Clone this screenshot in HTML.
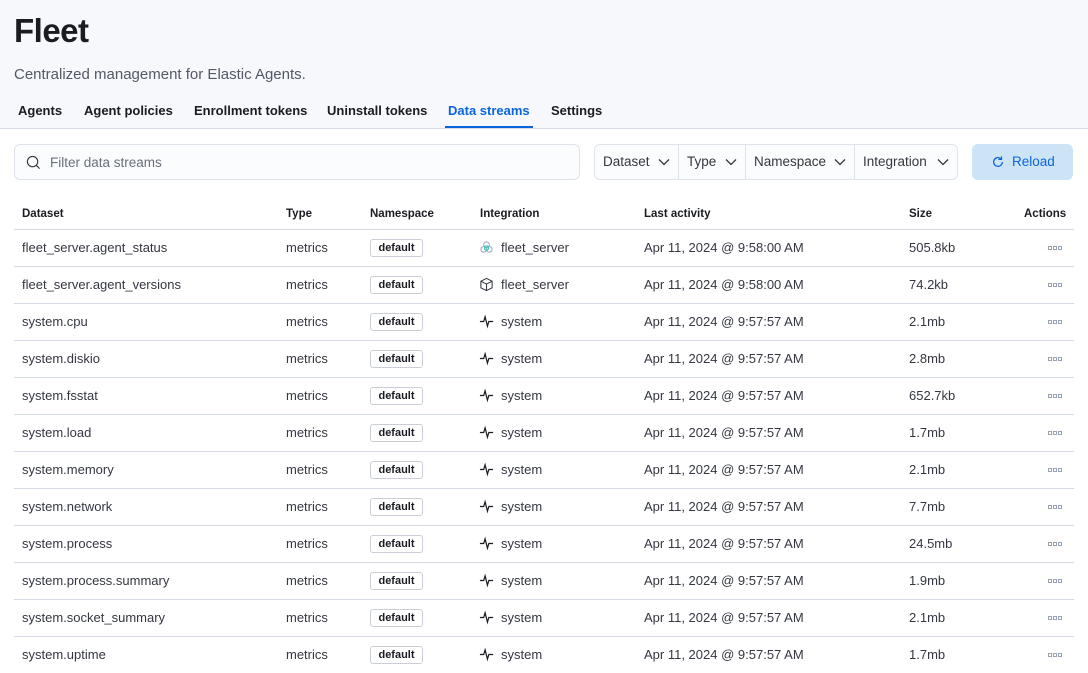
<!DOCTYPE html>
<html><head><meta charset="utf-8"><style>
*{box-sizing:border-box;margin:0;padding:0}
body{width:1088px;height:672px;overflow:hidden;background:#fff;font-family:"Liberation Sans",sans-serif;color:#343741;position:relative}
.hdr{position:absolute;left:0;top:0;width:1088px;height:129px;background:#f7f8fc;border-bottom:1px solid #d3dae6}
h1{position:absolute;left:14px;top:12px;font-size:33px;font-weight:700;color:#1a1c21;letter-spacing:-0.5px}
.sub{position:absolute;left:14px;top:66px;font-size:15px;color:#535966}
.tab{position:absolute;top:103px;font-size:13px;font-weight:700;color:#1a1c21}
.tab.act{color:#0b64dd}
.ul{position:absolute;left:445px;top:126px;width:88px;height:2px;background:#0b64dd}
.search{position:absolute;left:14px;top:144px;width:566px;height:36px;border:1px solid #dfe3eb;border-radius:6px;background:#fbfcfd}
.search span{position:absolute;left:35px;top:10px;font-size:13.5px;color:#69707d}
.filters{position:absolute;left:594px;top:144px;width:364px;height:36px;border:1px solid #dfe3eb;border-radius:6px;background:#fbfcfd;display:flex}
.filters div{height:34px;border-right:1px solid #dfe3eb;font-size:13.5px;color:#343741;padding:9px 0 0 8px;position:relative}
.filters div:last-child{border-right:none}
.filters svg{position:absolute;top:13px}
.reload{position:absolute;left:972px;top:144px;width:101px;height:36px;border-radius:6px;background:#cce4f5;color:#0b64dd;font-size:13.5px}
.reload span{position:absolute;left:40px;top:10px}
.th{position:absolute;top:208px;font-size:11.5px;font-weight:700;color:#1a1c21}
.row{position:absolute;left:14px;width:1060px;height:37px;border-top:1px solid #d3dae6;font-size:13px}
.row>*{position:absolute;top:10px}
.badge{top:9px!important;left:356px;width:53px;height:18px;border:1px solid #c9ced8;border-radius:3px;font-size:11px;font-weight:700;color:#1a1c21;text-align:center;line-height:16px}
.dots{display:block;left:1034px;top:16px!important;width:16px;height:4px}
.dots i{display:block;float:left;width:4px;height:4px;border:1px solid #98a2b3;margin-right:1px}
</style></head><body>
<div class="hdr"></div>
<h1>Fleet</h1>
<div class="sub">Centralized management for Elastic Agents.</div>
<div class="tab" style="left:18px">Agents</div>
<div class="tab" style="left:84px">Agent policies</div>
<div class="tab" style="left:194px">Enrollment tokens</div>
<div class="tab" style="left:327px">Uninstall tokens</div>
<div class="tab act" style="left:448px">Data streams</div>
<div class="tab" style="left:551px">Settings</div>
<div class="ul"></div>
<div class="search"><svg style="position:absolute;left:11px;top:10px" width="15" height="15" viewBox="0 0 16 16"><circle cx="7" cy="7" r="5.5" fill="none" stroke="#343741" stroke-width="1.2"/><path d="M11 11l3.5 3.5" stroke="#343741" stroke-width="1.2"/></svg><span>Filter data streams</span></div>
<div class="filters">
<div style="width:84px">Dataset<svg style="left:63px" width="12" height="8" viewBox="0 0 12 8"><path d="M1 1.5l5 5 5-5" fill="none" stroke="#343741" stroke-width="1.3"/></svg></div>
<div style="width:67px">Type<svg style="left:46px" width="12" height="8" viewBox="0 0 12 8"><path d="M1 1.5l5 5 5-5" fill="none" stroke="#343741" stroke-width="1.3"/></svg></div>
<div style="width:109px">Namespace<svg style="left:88px" width="12" height="8" viewBox="0 0 12 8"><path d="M1 1.5l5 5 5-5" fill="none" stroke="#343741" stroke-width="1.3"/></svg></div>
<div style="width:102px">Integration<svg style="left:82px" width="12" height="8" viewBox="0 0 12 8"><path d="M1 1.5l5 5 5-5" fill="none" stroke="#343741" stroke-width="1.3"/></svg></div>
</div>
<div class="reload"><svg style="position:absolute;left:19px;top:11px" width="14" height="14" viewBox="0 0 16 16"><path d="M13 8a5 5 0 1 1-1.5-3.6" fill="none" stroke="#0b64dd" stroke-width="1.4"/><path d="M12 1.5v3.5h-3.5" fill="none" stroke="#0b64dd" stroke-width="1.4"/></svg><span>Reload</span></div>
<div class="th" style="left:22px">Dataset</div>
<div class="th" style="left:286px">Type</div>
<div class="th" style="left:370px">Namespace</div>
<div class="th" style="left:480px">Integration</div>
<div class="th" style="left:644px">Last activity</div>
<div class="th" style="left:909px">Size</div>
<div class="th" style="left:1024px">Actions</div>
<div id="rows"></div>
<script>
var d=[["fleet_server.agent_status","fleet_server","Apr 11, 2024 @ 9:58:00 AM","505.8kb",1],
["fleet_server.agent_versions","fleet_server","Apr 11, 2024 @ 9:58:00 AM","74.2kb",2],
["system.cpu","system","Apr 11, 2024 @ 9:57:57 AM","2.1mb",0],
["system.diskio","system","Apr 11, 2024 @ 9:57:57 AM","2.8mb",0],
["system.fsstat","system","Apr 11, 2024 @ 9:57:57 AM","652.7kb",0],
["system.load","system","Apr 11, 2024 @ 9:57:57 AM","1.7mb",0],
["system.memory","system","Apr 11, 2024 @ 9:57:57 AM","2.1mb",0],
["system.network","system","Apr 11, 2024 @ 9:57:57 AM","7.7mb",0],
["system.process","system","Apr 11, 2024 @ 9:57:57 AM","24.5mb",0],
["system.process.summary","system","Apr 11, 2024 @ 9:57:57 AM","1.9mb",0],
["system.socket_summary","system","Apr 11, 2024 @ 9:57:57 AM","2.1mb",0],
["system.uptime","system","Apr 11, 2024 @ 9:57:57 AM","1.7mb",0]];
var ic=['<path d="M1 8h4l1.5-5 2.5 10 1.5-5h4.5" fill="none" stroke="#1a1c21" stroke-width="1.3"/>',
'<circle cx="8" cy="5" r="3" fill="none" stroke="#98a2b3"/><circle cx="5" cy="10" r="3" fill="none" stroke="#98a2b3"/><circle cx="11" cy="10" r="3" fill="none" stroke="#98a2b3"/><circle cx="8" cy="8.5" r="2.2" fill="none" stroke="#36c9c0" stroke-width="1.3"/>',
'<path d="M8 1.5l6 3v7l-6 3-6-3v-7z M2 4.5l6 3 6-3 M8 7.5v7" fill="none" stroke="#343741" stroke-width="1.1"/>'];
var h='';
d.forEach(function(r,i){h+='<div class="row" style="top:'+(229+i*37)+'px"><span style="left:8px">'+r[0]+'</span><span style="left:272px">metrics</span><div class="badge">default</div><svg style="position:absolute;left:465px;top:10px" width="15" height="15" viewBox="0 0 16 16">'+ic[r[4]]+'</svg><span style="left:487px">'+r[1]+'</span><span style="left:630px">'+r[2]+'</span><span style="left:895px">'+r[3]+'</span><span class="dots"><i></i><i></i><i></i></span></div>';});
document.getElementById('rows').innerHTML=h;
</script>
</body></html>
